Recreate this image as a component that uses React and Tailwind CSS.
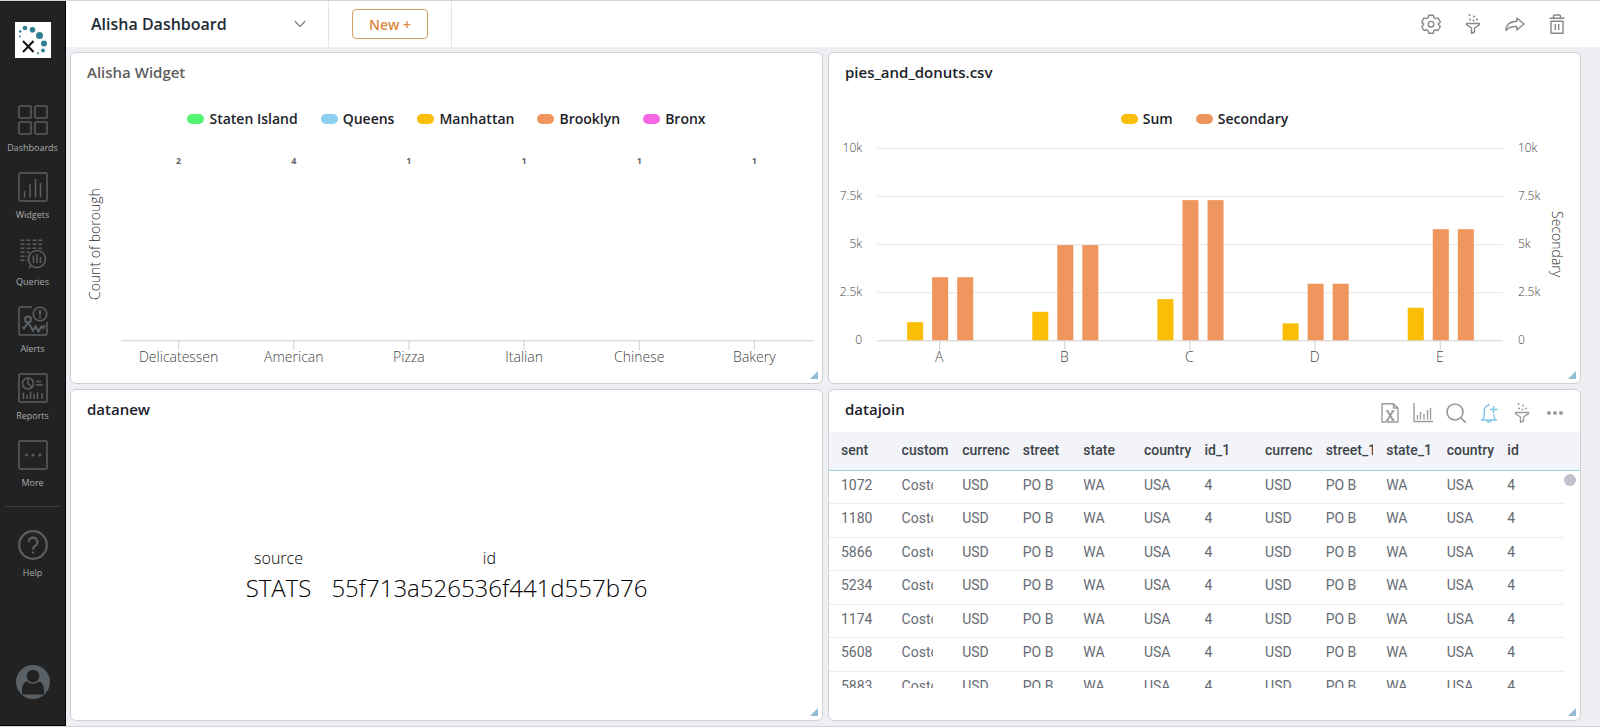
const NAV = [
  { label: "Dashboards", icon: DashboardsIcon },
  { label: "Widgets", icon: WidgetsIcon },
  { label: "Queries", icon: QueriesIcon },
  { label: "Alerts", icon: AlertsIcon },
  { label: "Reports", icon: ReportsIcon },
  { label: "More", icon: MoreIcon },
];

const BOROUGHS = [
  { name: "Staten Island", color: "bg-[#55f573]" },
  { name: "Queens", color: "bg-[#8ccff0]" },
  { name: "Manhattan", color: "bg-[#fabe05]" },
  { name: "Brooklyn", color: "bg-[#ee965e]" },
  { name: "Bronx", color: "bg-[#f567e6]" },
];

const CUISINES = [
  { name: "Delicatessen", count: 2 },
  { name: "American", count: 4 },
  { name: "Pizza", count: 1 },
  { name: "Italian", count: 1 },
  { name: "Chinese", count: 1 },
  { name: "Bakery", count: 1 },
];

const SERIES = [
  { name: "Sum", color: "bg-[#fabe05]" },
  { name: "Secondary", color: "bg-[#ee965e]" },
];

const PIES = [
  { name: "A", sum: 940, secondary: 3280 },
  { name: "B", sum: 1480, secondary: 4950 },
  { name: "C", sum: 2140, secondary: 7290 },
  { name: "D", sum: 880, secondary: 2940 },
  { name: "E", sum: 1690, secondary: 5780 },
];

const TICKS = [
  { value: 10000, label: "10k" },
  { value: 7500, label: "7.5k" },
  { value: 5000, label: "5k" },
  { value: 2500, label: "2.5k" },
  { value: 0, label: "0" },
];

const COLUMNS = [
  "sent",
  "custom",
  "currenc",
  "street",
  "state",
  "country",
  "id_1",
  "currenc",
  "street_1",
  "state_1",
  "country",
  "id",
];

const ROWS = ["1072", "1180", "5866", "5234", "1174", "5608", "5883"].map(
  (sent) => [
    sent,
    "Costco",
    "USD",
    "PO B",
    "WA",
    "USA",
    "4",
    "USD",
    "PO Box",
    "WA",
    "USA",
    "4",
  ]
);

/* sidebar icons */
function NavSvg({ children }) {
  return (
    <svg
      viewBox="0 0 30 30"
      className="size-[30px]"
      fill="none"
      stroke="#5b6064"
      strokeWidth="1.5"
      aria-hidden="true"
    >
      {children}
    </svg>
  );
}

function DashboardsIcon() {
  return (
    <NavSvg>
      <rect x="1" y="1" width="12" height="12" rx="1" />
      <rect x="17" y="1" width="12" height="12" rx="1" />
      <rect x="1" y="17" width="12" height="12" rx="1" />
      <rect x="17" y="17" width="12" height="12" rx="1" />
    </NavSvg>
  );
}

function WidgetsIcon() {
  return (
    <NavSvg>
      <rect x="1" y="1" width="28" height="28" rx="1.5" />
      <path d="M6.5 19v6.5M12 12v13.5M17.5 7v18.5M22.5 11v14.5" />
    </NavSvg>
  );
}

function QueriesIcon() {
  return (
    <NavSvg>
      <path
        d="M2.5 1.200h21.500M2.5 5.200h21.500M2.5 9.200h21.500M2.5 13.200h9M2.5 17.200h7M2.5 21.200h7"
        strokeDasharray="4 2"
        strokeWidth="1.6"
      />
      <circle cx="19" cy="20" r="8.5" fill="#222" />
      <path d="M13 26.5l-2 2.5M15.5 16.5v7.5M19 15v9M22.500 18v6" />
    </NavSvg>
  );
}

function AlertsIcon() {
  return (
    <NavSvg>
      <path d="M14 1H2.5Q1 1 1 2.5v25Q1 29 2.5 29h25q1.5 0 1.5-1.5V16" />
      <circle cx="22" cy="8" r="6.8" />
      <path d="M22 4v5M22 10.5v1.8" strokeWidth="2" />
      <circle cx="10" cy="13.5" r="3" strokeWidth="2" />
      <path d="M4.5 21l1.500 1.500 4-6 5 8 2.500-4 3 5 3-5 2 1.500 1.500-3" strokeWidth="2" />
    </NavSvg>
  );
}

function ReportsIcon() {
  return (
    <NavSvg>
      <rect x="1" y="1" width="28" height="28" rx="1.5" />
      <circle cx="10" cy="10.5" r="5.5" />
      <path d="M10 5v5.5l4 3.500M18 8.500h5M18 12h7" />
      <path d="M5.500 19.500V26M9 22v4M12.500 18.500V26M16 21v5M19.500 19.500V26M24 20.500V26" />
    </NavSvg>
  );
}

function MoreIcon() {
  return (
    <NavSvg>
      <rect x="1" y="1" width="28" height="28" rx="1.5" />
      <g fill="#5b6064" stroke="none">
        <circle cx="8.5" cy="15" r="1.5" />
        <circle cx="15" cy="15" r="1.5" />
        <circle cx="22" cy="15" r="1.5" />
      </g>
    </NavSvg>
  );
}

function HelpIcon() {
  return (
    <NavSvg>
      <circle cx="15" cy="15" r="13.8" strokeWidth="2.2" />
      <path
        d="M10.800 12a4.300 4.300 0 1 1 6.500 3.600c-1.500.9-2.300 1.600-2.300 3.900M15 21.500v2"
        strokeWidth="2.2"
      />
    </NavSvg>
  );
}

function Logo() {
  return (
    <svg viewBox="0 0 36 36" className="size-9 bg-white" aria-hidden="true">
      <g fill="#2f7f93">
        <circle cx="10" cy="6" r="2.300" />
        <circle cx="17.500" cy="7.700" r="2.800" />
        <circle cx="24.500" cy="13.500" r="3.500" />
        <circle cx="29" cy="21.500" r="3" />
        <circle cx="28" cy="28.500" r="2" />
        <circle cx="23" cy="31.300" r="1.100" />
        <circle cx="5.200" cy="9.500" r="1.300" />
        <circle cx="4.800" cy="14.500" r=".9" />
      </g>
      <path d="M8 19l10.500 11M18.500 19L8 30" stroke="#111" strokeWidth="2" />
    </svg>
  );
}

function Avatar() {
  return (
    <svg viewBox="0 0 34 34" className="size-[34px]" aria-hidden="true">
      <circle cx="17" cy="17" r="17" fill="#596066" />
      <circle cx="17" cy="11" r="6.3" fill="#222" />
      <path
        d="M6 29.500v-4.500c0-5 2.500-8 5-8.500 3.500 3 8.500 3 12 0 2.500.5 5 3.500 5 8.500v4.500z"
        fill="#222"
      />
    </svg>
  );
}

/* toolbar icons */
function ToolSvg({ children }) {
  return (
    <svg
      viewBox="0 0 20 20"
      className="size-5"
      fill="none"
      stroke="currentColor"
      strokeWidth="1.4"
      strokeLinejoin="round"
      aria-hidden="true"
    >
      {children}
    </svg>
  );
}

function GearIcon() {
  return (
    <ToolSvg>
      <path d="M7.700 1.200h4.600l.7 2.600 1.400.8 2.600-.7 2.300 4-1.900 1.900v.8l1.900 1.900-2.300 4-2.600-.7-1.400.8-.7 2.600H7.700L7 16.600l-1.400-.8-2.600.7-2.300-4 1.900-1.900v-.8L.7 7.900l2.300-4 2.600.7L7 3.800z" />
      <circle cx="10" cy="10.200" r="2.800" />
    </ToolSvg>
  );
}

function FunnelIcon() {
  return (
    <ToolSvg>
      <path d="M3.500 9.500h13v1.200l-5 3.300v4l-3 1.500V14l-5-3.300z" />
      <g fill="currentColor" stroke="none">
        <circle cx="6.500" cy="1" r="1" />
        <circle cx="11" cy="2.500" r="1" />
        <circle cx="7" cy="5.500" r="1" />
        <circle cx="10.500" cy="6.500" r="1" />
        <circle cx="14" cy="5.500" r="1" />
      </g>
    </ToolSvg>
  );
}

function ShareIcon() {
  return (
    <ToolSvg>
      <path d="M11.800 4l7.200 6-7.200 6v-3.500C6.500 12.300 3 13.800 1 16.500.8 11 5 7.300 11.800 7.200z" />
    </ToolSvg>
  );
}

function TrashIcon() {
  return (
    <ToolSvg>
      <path d="M2.500 4.300h15M6.500 4V2.200Q6.500 1 7.700 1h4.600q1.200 0 1.200 1.200V4" />
      <path d="M4 7.200h12v12H4zM8.300 10v6M11.700 10v6" />
    </ToolSvg>
  );
}

function ExcelIcon() {
  return (
    <ToolSvg>
      <path d="M2 .8h11.500L18 5v14H2zM13.500.8V5H18" />
      <path d="M7.500 8l5.500 9M13 8l-5.500 9" strokeWidth="1.8" />
      <path d="M6 8h3M11.500 8h3M6 17h3M11.500 17h3" />
    </ToolSvg>
  );
}

function ChartIcon() {
  return (
    <ToolSvg>
      <path d="M1 0v18.500h19M4.500 12v4.500M7.500 9v7.500M11 11v5.500M14.500 7v9.500M17.500 5v11.500" />
    </ToolSvg>
  );
}

function SearchIcon() {
  return (
    <ToolSvg>
      <circle cx="9" cy="9" r="8" strokeWidth="1.7" />
      <path d="M14.800 14.800l5 5" strokeWidth="1.7" />
    </ToolSvg>
  );
}

function BellIcon() {
  return (
    <ToolSvg>
      <path d="M10.500 2.500C7 2 5.200 5 5.200 8v4.500q0 2.500-2.700 4.500h15q-2.500-1.500-2.500-4.500V11" />
      <path d="M7.500 17.500q2.500 3 5 0M9.500 2.200V1M14.500 3v7M11 6.500h7.500" />
    </ToolSvg>
  );
}

function DotsIcon() {
  return (
    <ToolSvg>
      <g fill="currentColor" stroke="none">
        <circle cx="4" cy="10" r="2" />
        <circle cx="10" cy="10" r="2" />
        <circle cx="16" cy="10" r="2" />
      </g>
    </ToolSvg>
  );
}

function IconButton({ label, className = "", children }) {
  return (
    <button type="button" aria-label={label} className={className}>
      {children}
    </button>
  );
}

function Sidebar() {
  return (
    <aside className="flex w-[66px] shrink-0 flex-col items-center border-r border-b border-black bg-[#222] pt-[21px] pb-[26px]">
      <Logo />
      <nav className="mt-[47px] flex w-full flex-col items-center gap-[15px]">
        {NAV.map(({ label, icon: Icon }) => (
          <a key={label} href="#" className="flex flex-col items-center gap-1">
            <Icon />
            <span className="text-[9px] leading-[18px] text-[#a9acae]">
              {label}
            </span>
          </a>
        ))}
      </nav>
      <hr className="mt-[14px] w-[56px] border-[#3a3a3a]" />
      <a href="#" className="mt-[23px] flex flex-col items-center gap-1">
        <HelpIcon />
        <span className="text-[9px] leading-[18px] text-[#a9acae]">Help</span>
      </a>
      <a href="#" aria-label="Account" className="mt-auto">
        <Avatar />
      </a>
    </aside>
  );
}

function Topbar() {
  return (
    <header className="flex h-[46px] items-stretch bg-white pr-[33px]">
      <label className="relative flex w-[263px] items-center border-r border-[#e4e4e4]">
        <select
          aria-label="Dashboard"
          className="w-full appearance-none bg-transparent pl-[25px] text-[16px] font-semibold text-[#222a33]"
        >
          <option>Alisha Dashboard</option>
        </select>
        <svg
          viewBox="0 0 12 8"
          className="pointer-events-none absolute right-[22px] h-2 w-3"
          fill="none"
          stroke="#8a8a8a"
          strokeWidth="1.5"
          aria-hidden="true"
        >
          <path d="M.8 1L6 6.500 11.200 1" />
        </svg>
      </label>
      <div className="flex w-[123px] items-center justify-center border-r border-[#e4e4e4]">
        <button
          type="button"
          className="h-[30px] w-[76px] rounded border border-[#d3a263] text-[14px] font-semibold text-[#db8a3e]"
        >
          New +
        </button>
      </div>
      <div className="ml-auto flex items-center gap-[22px] text-[#85888c]">
        <IconButton label="Settings">
          <GearIcon />
        </IconButton>
        <IconButton label="Filter">
          <FunnelIcon />
        </IconButton>
        <IconButton label="Share">
          <ShareIcon />
        </IconButton>
        <IconButton label="Delete">
          <TrashIcon />
        </IconButton>
      </div>
    </header>
  );
}

function Card({ title, muted, tools, children }) {
  return (
    <section className="relative flex min-h-[332px] min-w-0 flex-col overflow-hidden rounded-md border border-[#cfd0d3] bg-white">
      <div className="flex h-[42px] items-center justify-between px-4 pb-[3px]">
        <h2
          className={
            muted
              ? "text-[15px] font-semibold text-[#5e5e5e]"
              : "text-[15px] font-semibold text-[#1c2229]"
          }
        >
          {title}
        </h2>
        {tools}
      </div>
      {children}
      {/* resize grip */}
      <svg
        viewBox="0 0 8 8"
        className="absolute right-1 bottom-1 size-2"
        aria-hidden="true"
      >
        <path d="M8 0v8H0z" fill="#92bcd4" />
      </svg>
    </section>
  );
}

function Legend({ items }) {
  return (
    <ul className="mt-[13px] flex h-[22px] items-center justify-center gap-[23px]">
      {items.map((item) => (
        <li key={item.name} className="flex items-center gap-[5px]">
          <span className={`h-[10px] w-[17px] rounded-full ${item.color}`} />
          <span className="text-[14px] leading-[22px] font-semibold text-[#1c2229]">
            {item.name}
          </span>
        </li>
      ))}
    </ul>
  );
}

function BoroughChart() {
  return (
    <svg
      viewBox="0 0 750 246"
      className="mt-[6px] w-full"
      role="img"
      aria-label="Count of borough"
    >
      <text
        transform="translate(29 108) rotate(-90)"
        textAnchor="middle"
        fontSize="14"
        fontWeight="300"
        fill="#333"
      >
        Count of borough
      </text>
      <path d="M50 204.500h691" stroke="#d0d0d0" />
      {CUISINES.map((c, i) => {
        const x = 107.5 + Math.round(i * 115);
        return (
          <g key={c.name} textAnchor="middle">
            <text x={x} y="28" fontSize="9" fontWeight="700" fill="#666">
              {c.count}
            </text>
            <path d={`M${x} 204v10`} stroke="#d0d0d0" />
            <text x={x} y="226" fontSize="14" fontWeight="300" fill="#444">
              {c.name}
            </text>
          </g>
        );
      })}
    </svg>
  );
}

function PiesChart() {
  const yOf = (v) => 204 - (v / 10000) * 192;

  return (
    <svg
      viewBox="0 0 750 246"
      className="mt-[6px] w-full"
      role="img"
      aria-label="Sum and Secondary by category"
    >
      {TICKS.map((t) => (
        <g key={t.label} fontSize="12" fontWeight="300" fill="#444">
          <path
            d={`M48 ${yOf(t.value) + 0.5}h625`}
            stroke={t.value === 0 ? "#cfd0d3" : "#e4e5e7"}
          />
          <text x="33" y={yOf(t.value) + 4} textAnchor="end">
            {t.label}
          </text>
          <text x="688" y={yOf(t.value) + 4}>
            {t.label}
          </text>
        </g>
      ))}
      {PIES.map((p, i) => {
        const x = 110 + i * 125;
        const sumY = yOf(p.sum);
        const secY = yOf(p.secondary);
        return (
          <g key={p.name}>
            <rect x={x - 32} y={sumY} width="16" height={204 - sumY} fill="#fabe05" />
            <rect x={x - 7} y={secY} width="16" height={204 - secY} fill="#ee965e" />
            <rect x={x + 18} y={secY} width="16" height={204 - secY} fill="#ee965e" />
            <path d={`M${x + 0.5} 205v9`} stroke="#cfd0d3" />
            <text
              x={x}
              y="226"
              fontSize="14"
              fontWeight="300"
              fill="#444"
              textAnchor="middle"
            >
              {p.name}
            </text>
          </g>
        );
      })}
      <text
        transform="translate(722 108) rotate(90)"
        textAnchor="middle"
        fontSize="14"
        fontWeight="300"
        fill="#333"
      >
        Secondary
      </text>
    </svg>
  );
}

function Stats() {
  return (
    <dl className="flex flex-1 items-center justify-center gap-5 text-center font-light text-black">
      <div>
        <dt className="text-[16px] leading-[24px]">source</dt>
        <dd className="text-[24px] leading-[36px]">STATS</dd>
      </div>
      <div>
        <dt className="text-[16px] leading-[24px]">id</dt>
        <dd className="text-[24px] leading-[36px]">55f713a526536f441d557b76</dd>
      </div>
    </dl>
  );
}

function JoinTools() {
  return (
    <div className="-mr-px flex items-center gap-[13px] pt-[7px] text-[#9a9c9f]">
      <IconButton label="Export to Excel">
        <ExcelIcon />
      </IconButton>
      <IconButton label="Chart">
        <ChartIcon />
      </IconButton>
      <IconButton label="Search">
        <SearchIcon />
      </IconButton>
      <IconButton label="Add alert" className="text-[#7cc6ea]">
        <BellIcon />
      </IconButton>
      <IconButton label="Filter">
        <FunnelIcon />
      </IconButton>
      <IconButton label="More">
        <DotsIcon />
      </IconButton>
    </div>
  );
}

function JoinTable() {
  return (
    <div className="relative h-[256px] overflow-hidden font-['Roboto',sans-serif] text-[14px]">
      <table className="h-[273px] w-full table-fixed border-collapse text-left">
        <thead>
          <tr className="h-[38px] border-b border-[#9bd3dc] bg-[#f2f4f9]">
            {COLUMNS.map((c, i) => (
              <th key={i} className="p-0 pl-3 font-medium text-[#3f444a]">
                <div className="mr-px overflow-hidden whitespace-nowrap">{c}</div>
              </th>
            ))}
            <th className="w-6 p-0" />
          </tr>
        </thead>
        <tbody>
          {ROWS.map((row) => (
            <tr key={row[0]} className="border-b border-[#ececee]">
              {row.map((cell, i) => (
                <td key={i} className="p-0 pb-[3px] pl-3 text-[#666b73]">
                  <div className="mr-[17px] overflow-hidden whitespace-nowrap">
                    {cell}
                  </div>
                </td>
              ))}
              <td className="p-0" />
            </tr>
          ))}
        </tbody>
      </table>
      {/* scroll track */}
      <div className="absolute top-[39px] right-0 bottom-0 w-4 bg-white pt-[3px]">
        <div className="size-3 rounded-full bg-[#c0bfcb]" />
      </div>
    </div>
  );
}

export default function App() {
  return (
    <div className="flex min-h-screen border-y border-[#d3d4d6] bg-[#eeeff2] font-['Open_Sans',sans-serif]">
      <Sidebar />
      <div className="flex min-w-0 flex-1 flex-col">
        <Topbar />
        <main className="grid flex-1 grid-cols-2 gap-[5px] pt-[5px] pr-[19px] pb-[5px] pl-1">
          <Card title="Alisha Widget" muted>
            <Legend items={BOROUGHS} />
            <BoroughChart />
          </Card>
          <Card title="pies_and_donuts.csv">
            <Legend items={SERIES} />
            <PiesChart />
          </Card>
          <Card title="datanew">
            <Stats />
          </Card>
          <Card title="datajoin" tools={<JoinTools />}>
            <JoinTable />
          </Card>
        </main>
      </div>
    </div>
  );
}
